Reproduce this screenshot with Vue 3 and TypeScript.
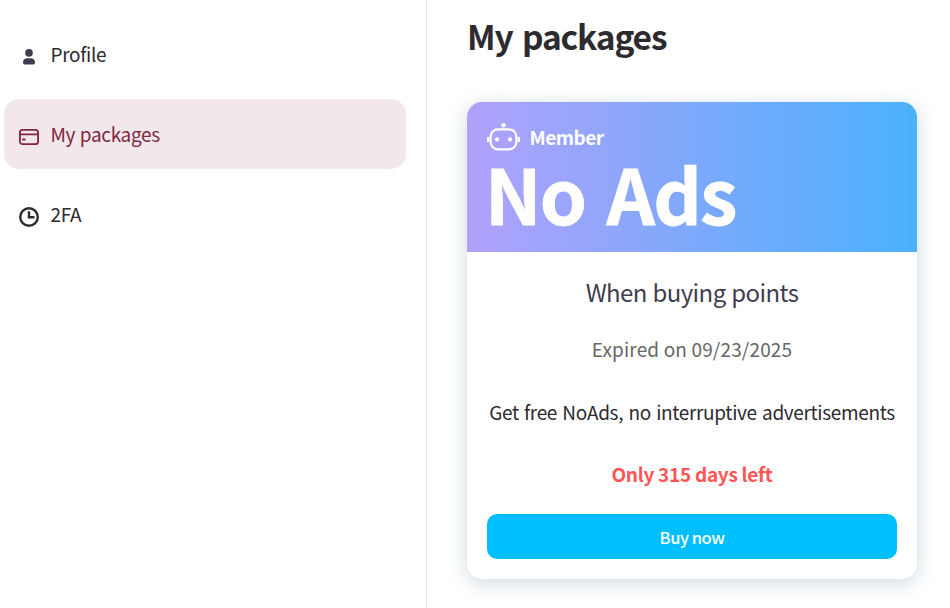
<script setup lang="ts">
interface MenuItem {
  key: 'profile' | 'packages' | 'twofa'
  label: string
}

const menu: MenuItem[] = [
  { key: 'profile', label: 'Profile' },
  { key: 'packages', label: 'My packages' },
  { key: 'twofa', label: '2FA' },
]
const active: MenuItem['key'] = 'packages'
const daysLeft = 315
</script>

<template>
  <div class="page">
    <nav class="sidebar">
      <a v-for="item in menu" :key="item.key" class="item" :class="[item.key, { active: item.key === active }]">
        <svg v-if="item.key === 'profile'" class="icon" viewBox="0 0 20 20" fill="#3f3d50">
          <circle cx="10" cy="5.9" r="3.8" />
          <path d="M4 15.3C4 12.7 6 11.2 8.2 11.2h3.6c2.2 0 4.2 1.5 4.2 4.1 0 1.4-.6 2.1-1.8 2.1H5.8C4.6 17.4 4 16.7 4 15.3Z" />
        </svg>
        <svg v-else-if="item.key === 'packages'" class="icon" viewBox="0 0 20 20" fill="none" stroke="#7f2641" stroke-width="1.8">
          <rect x=".9" y="2.9" width="18.2" height="14.2" rx="2.7" />
          <path d="M1 7.3h18M3.2 12.5h3.3" />
        </svg>
        <svg v-else class="icon" viewBox="0 0 20 20" fill="none" stroke="#2d2b2f" stroke-width="2.4">
          <circle cx="10" cy="10" r="8.8" />
          <path d="M10 4.2v6h5.5" />
        </svg>
        <span class="label">{{ item.label }}</span>
      </a>
    </nav>
    <main class="content">
      <h1>My packages</h1>
      <section class="card">
        <header class="banner">
          <div class="member">
            <svg class="robot" viewBox="0 0 33 28" fill="none" stroke="#fff" stroke-width="2.2">
              <rect x="3.6" y="6.3" width="25.8" height="20" rx="7.3" />
              <circle cx="16.5" cy="2.3" r="2.3" fill="#fff" stroke="none" />
              <circle cx="10" cy="16.4" r="2.1" fill="#fff" stroke="none" />
              <circle cx="23" cy="16.4" r="2.1" fill="#fff" stroke="none" />
              <path d="M1.1 14v5M31.9 14v5" />
            </svg>
            <span class="member-label">Member</span>
          </div>
          <div class="plan">No Ads</div>
        </header>
        <div class="details">
          <p class="condition">When buying points</p>
          <p class="expiry">Expired on 09/23/2025</p>
          <p class="benefit">Get free NoAds, no interruptive advertisements</p>
          <p class="remaining">Only {{ daysLeft }} days left</p>
          <button type="button" class="buy">Buy now</button>
        </div>
      </section>
    </main>
  </div>
</template>

<style>
body {
  margin: 0;
  background: #fff;
  overflow: hidden;
}
</style>

<style scoped>
.page {
  display: flex;
  height: 608px;
  font-family: "Noto Sans CJK JP", "Noto Sans", sans-serif;
  color: #2d2b2f;
}
.sidebar {
  box-sizing: border-box;
  width: 427px;
  flex: none;
  display: flex;
  flex-direction: column;
  gap: 10px;
  padding: 19px 20px 0 4px;
  border-right: 1px solid #dfe4e8;
}
.item {
  box-sizing: border-box;
  display: flex;
  align-items: center;
  gap: 11.5px;
  height: 70px;
  padding-left: 15px;
  border-radius: 15px;
  font-size: 19px;
  line-height: 30px;
  letter-spacing: -.32px;
  word-spacing: .6px;
}
.active {
  background: #f2e8eb;
  color: #7f2641;
}
.icon {
  width: 20px;
  height: 20px;
  flex: none;
  margin-top: 5px;
}
.label {
  margin-bottom: 1px;
}
.content {
  width: 450px;
  padding-left: 40px;
}
h1 {
  margin: 0;
  padding-top: 11px;
  height: 90px;
  font-size: 33.5px;
  line-height: 50px;
  font-weight: 700;
  letter-spacing: -1.15px;
  word-spacing: 3px;
  box-sizing: border-box;
  white-space: nowrap;
}
.card {
  margin-top: 12px;
  height: 477px;
  border-radius: 15px;
  background: #fff;
  box-shadow: 0 4px 20px rgba(38, 80, 110, .22);
}
.banner {
  box-sizing: border-box;
  height: 150px;
  padding: 20px;
  border-radius: 15px 15px 0 0;
  background: linear-gradient(90deg, #b1a1fb, #4ab1fc);
  color: #fff;
}
.member {
  display: flex;
  align-items: center;
  gap: 9.5px;
  height: 30px;
  font-size: 19px;
  font-weight: 700;
  letter-spacing: -.5px;
}
.robot {
  width: 33px;
  height: 28px;
}
.member-label {
  margin-bottom: 1px;
}
.plan {
  margin: -5px 0 0 -2px;
  height: 90px;
  font-size: 75.5px;
  line-height: 90px;
  font-weight: 700;
  letter-spacing: -1.8px;
  word-spacing: 6px;
  -webkit-text-stroke: .8px #fff;
  white-space: nowrap;
}
.details {
  display: flex;
  flex-direction: column;
  padding: 20px;
  text-align: center;
}
p {
  margin: 0;
  white-space: nowrap;
}
.condition {
  font-size: 24px;
  line-height: 40px;
  letter-spacing: -.6px;
  word-spacing: .9px;
  color: #3f3d50;
}
.expiry {
  margin-top: 22px;
  font-size: 19px;
  line-height: 30px;
  letter-spacing: .15px;
  color: #666;
}
.benefit {
  margin-top: 33px;
  font-size: 19px;
  line-height: 30px;
  letter-spacing: -.34px;
  word-spacing: 1.4px;
}
.remaining {
  margin-top: 32px;
  font-size: 19px;
  line-height: 30px;
  font-weight: 700;
  letter-spacing: -.28px;
  color: #ff5555;
}
.buy {
  height: 45px;
  margin-top: 25px;
  padding: 1px 0 0;
  border: 0;
  border-radius: 10px;
  background: #00bfff;
  color: #fff;
  font: 500 16.5px/44px "Noto Sans CJK JP", "Noto Sans", sans-serif;
  letter-spacing: -.45px;
}
</style>
